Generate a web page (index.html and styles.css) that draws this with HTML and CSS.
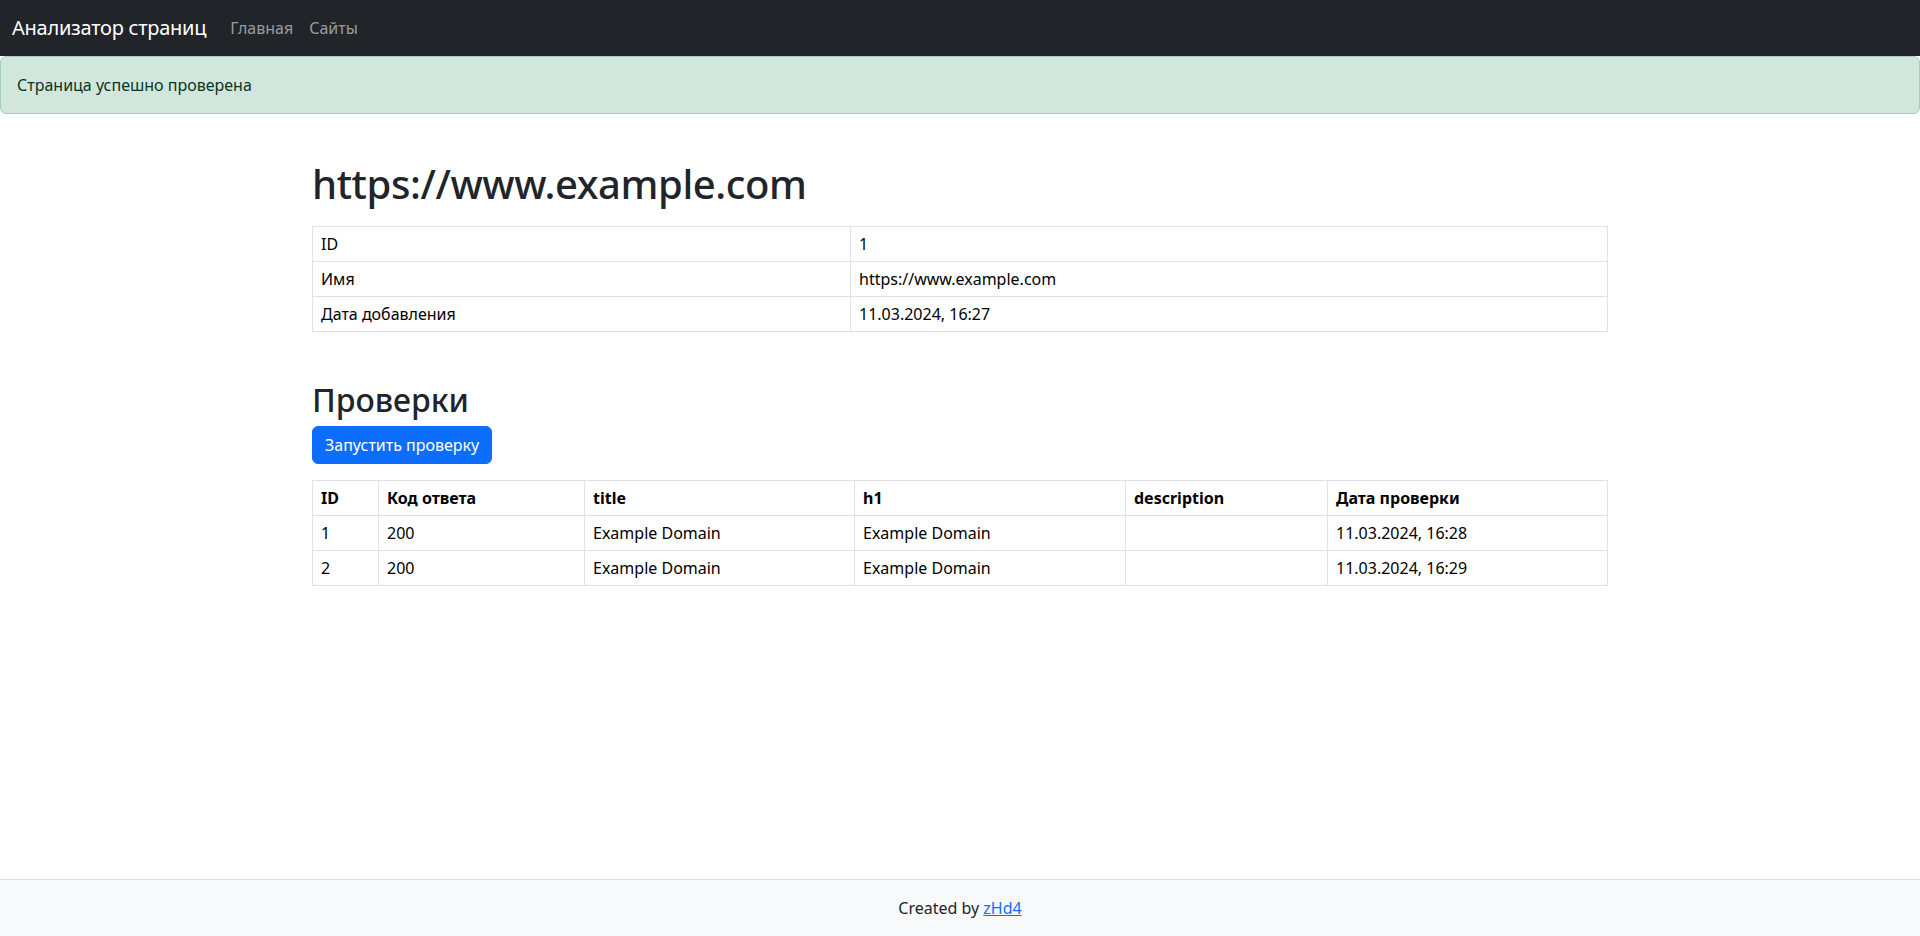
FILE: index.html
```html
<!DOCTYPE html>
<html lang="ru">
<head>
<meta charset="utf-8">
<title>Анализатор страниц</title>
<link rel="stylesheet" href="styles.css">
</head>
<body>
<nav class="navbar">
  <a class="brand" href="#">Анализатор страниц</a>
  <a class="nav-link" href="#">Главная</a>
  <a class="nav-link" href="#">Сайты</a>
</nav>
<div class="alert">Страница успешно проверена</div>
<main class="container">
  <h1 class="title">https://www.example.com</h1>
  <table class="table">
    <colgroup><col class="info-key"><col></colgroup>
    <tbody>
      <tr><td>ID</td><td>1</td></tr>
      <tr><td>Имя</td><td>https://www.example.com</td></tr>
      <tr><td>Дата добавления</td><td>11.03.2024, 16:27</td></tr>
    </tbody>
  </table>
  <h2 class="subtitle">Проверки</h2>
  <button class="btn" type="button">Запустить проверку</button>
  <table class="table checks">
    <colgroup>
      <col class="c-id"><col class="c-code"><col class="c-title"><col class="c-h1"><col class="c-desc"><col>
    </colgroup>
    <thead>
      <tr><th>ID</th><th>Код ответа</th><th>title</th><th>h1</th><th>description</th><th>Дата проверки</th></tr>
    </thead>
    <tbody>
      <tr><td>1</td><td>200</td><td>Example Domain</td><td>Example Domain</td><td></td><td>11.03.2024, 16:28</td></tr>
      <tr><td>2</td><td>200</td><td>Example Domain</td><td>Example Domain</td><td></td><td>11.03.2024, 16:29</td></tr>
    </tbody>
  </table>
</main>
<footer class="footer">Created by <a href="#">zHd4</a></footer>
</body>
</html>
```
FILE: styles.css
```css
* { box-sizing: border-box; }
html, body { height: 100%; }
body {
  margin: 0;
  min-height: 100vh;
  display: flex;
  flex-direction: column;
  font-family: "Noto Sans", "Open Sans", sans-serif;
  font-size: 16px;
  line-height: 1.5;
  color: #212529;
  background: #fff;
}
.navbar {
  display: flex;
  align-items: center;
  height: 56px;
  padding: 0 12px;
  background: #212529;
}
.brand {
  color: #fff;
  font-size: 20px;
  line-height: 30px;
  letter-spacing: -0.25px;
  text-decoration: none;
  margin-right: 16px;
}
.nav-link {
  color: rgba(255,255,255,.55);
  text-decoration: none;
  padding: 8px;
  line-height: 24px;
}
.alert {
  background: #d1e7dd;
  color: #0a3622;
  border: 1px solid #a3cfbb;
  border-radius: 6px;
  padding: 16px;
  line-height: 24px;
}
.container {
  width: 1320px;
  margin: 0 auto;
  padding: 0 12px;
}
.title {
  font-size: 40px;
  font-weight: 500;
  line-height: 48px;
  letter-spacing: -0.4px;
  margin: 46px 0 18px;
}
.subtitle {
  font-size: 32px;
  font-weight: 500;
  line-height: 38px;
  margin: 49px 0 7px;
}
.table {
  width: 100%;
  border-collapse: collapse;
  table-layout: fixed;
  color: #000;
}
.table td, .table th {
  border: 1px solid #dee2e6;
  padding: 5px 8px;
  line-height: 24px;
  text-align: left;
  vertical-align: top;
}
.table th { font-weight: 700; }
.info-key { width: 538px; }
.c-id { width: 66px; }
.c-code { width: 206px; }
.c-title { width: 270px; }
.c-h1 { width: 271px; }
.c-desc { width: 202px; }
.btn {
  display: block;
  font-family: inherit;
  font-size: 16px;
  line-height: 24px;
  padding: 6px 12px;
  border: 1px solid #0d6efd;
  border-radius: 6px;
  background: #0d6efd;
  color: #fff;
  margin-bottom: 16px;
  cursor: pointer;
}
.footer {
  margin-top: auto;
  background: #f8f9fa;
  border-top: 1px solid #dee2e6;
  padding: 16px;
  text-align: center;
  line-height: 24px;
}
.footer a { color: #0d6efd; }
```
